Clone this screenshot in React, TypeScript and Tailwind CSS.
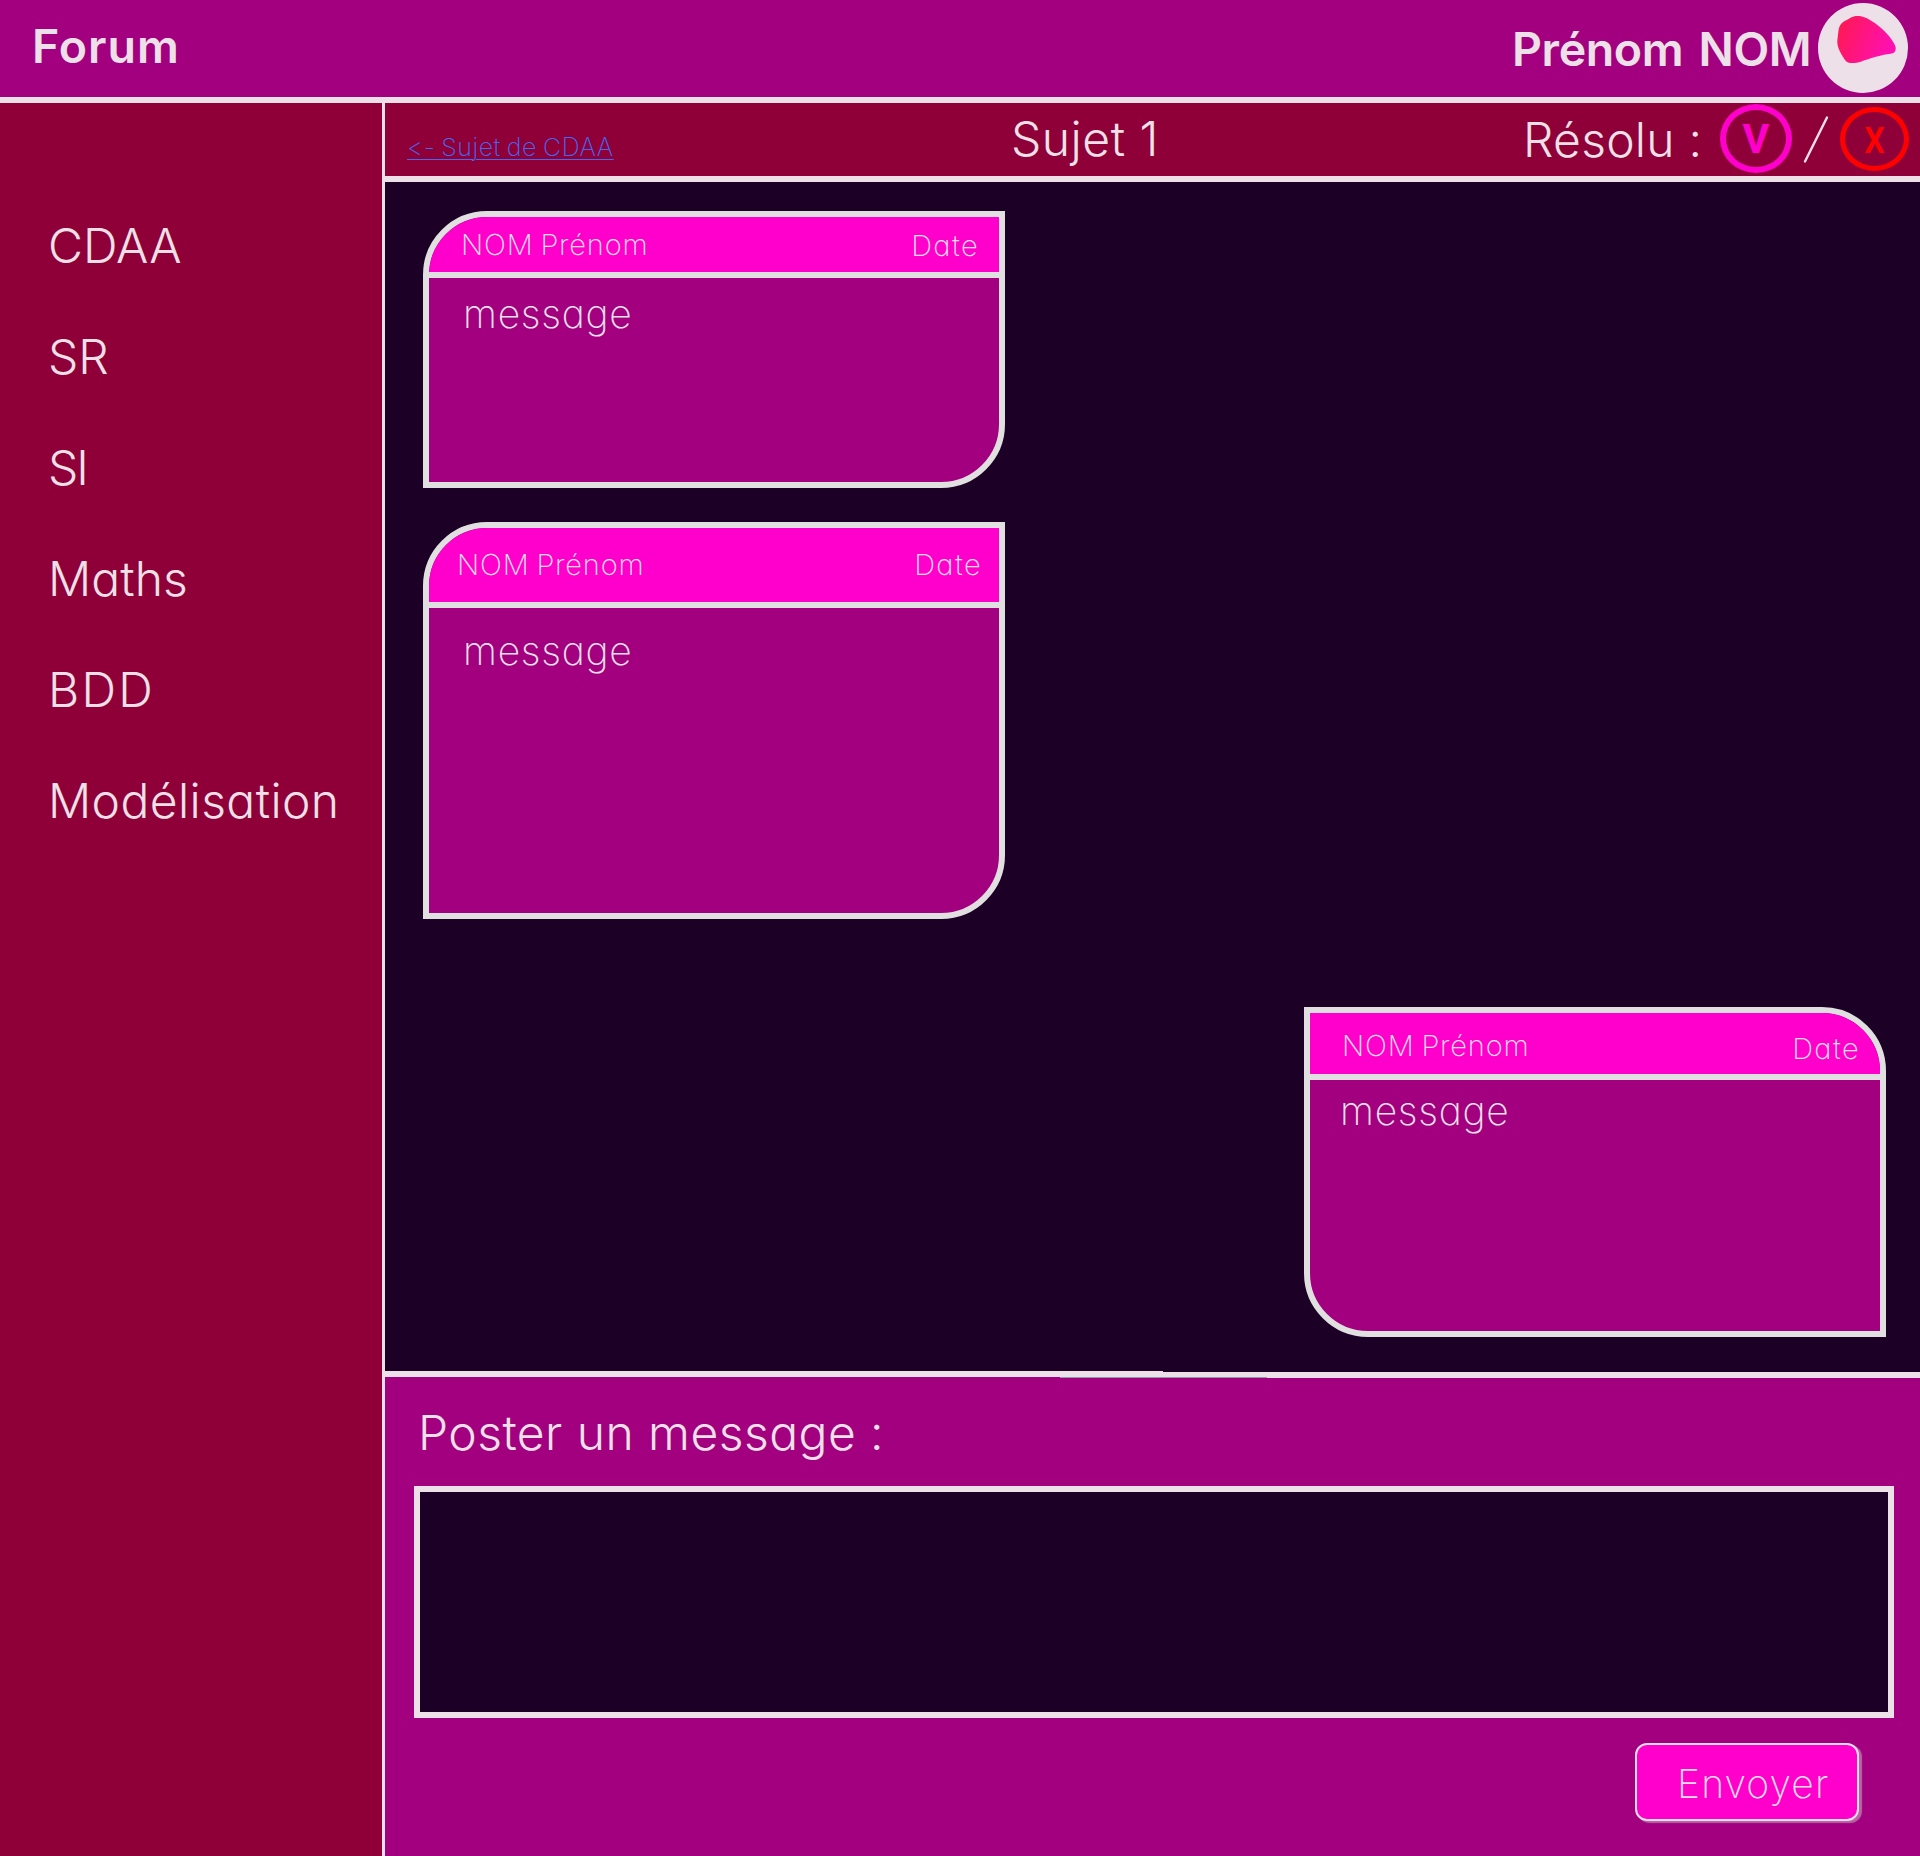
import type { ReactNode } from 'react';

const subjects = [
  { label: 'CDAA', tracking: 'tracking-[0px]' },
  { label: 'SR', tracking: 'tracking-[0px]' },
  { label: 'SI', tracking: 'tracking-[-2px]' },
  { label: 'Maths', tracking: 'tracking-[0.1px]' },
  { label: 'BDD', tracking: 'tracking-[2.3px]' },
  { label: 'Modélisation', tracking: 'tracking-[0.4px]' },
];

function Avatar() {
  return (
    <svg className="mt-[3px] size-[90px]" viewBox="0 0 90 90">
      <defs>
        <linearGradient id="blob" x1="0" y1="0" x2="1" y2="0.35">
          <stop offset="0" stopColor="#ff1a4b" />
          <stop offset="1" stopColor="#ff10b0" />
        </linearGradient>
      </defs>
      <circle cx="45" cy="45" r="45" fill="#ede0e8" />
      <path
        d="M33 14.5C36 12.5 42 12 48.5 15C60 21 70 30 75.500 39.500C77 42 77.700 43.500 77.700 45.500C77.500 50 75 50.500 71 51C57 53 47 57.500 40 59.500C34 60.500 29.500 60.500 27 57C21 48 18.500 42 19.500 36C20.500 30 20 24 23.500 20.500C26 18 29 17 33 14.500Z"
        fill="url(#blob)"
      />
    </svg>
  );
}

function Header() {
  return (
    <header className="flex h-[103px] items-start justify-between border-b-6 border-[#ede0e8] bg-[#a3007f] pl-8 text-[46.5px] leading-[56px] font-semibold">
      <h1 className="mt-[18px] tracking-[0.97px]">Forum</h1>
      <div className="flex w-[408px] justify-between pr-3">
        <span className="mt-[21px] tracking-[-0.4px] [word-spacing:4px]">Prénom NOM</span>
        <Avatar />
      </div>
    </header>
  );
}

function Sidebar() {
  return (
    <nav className="w-[385px] shrink-0 border-r-3 border-[#ede0e8] bg-[#8f0038] pt-[87px] pl-12">
      {subjects.map((s) => (
        <a key={s.label} className={`block text-[48px] leading-[111px] font-[280] ${s.tracking}`}>
          {s.label}
        </a>
      ))}
    </nav>
  );
}

function TopicBar() {
  return (
    <div className="grid h-[79px] grid-cols-[626px_512px_1fr] items-start border-b-6 border-[#ede0e8] bg-[#8f0038] text-[48px] leading-[60px] font-[270]">
      <a className="mt-7 ml-[22px] w-fit text-[25px] leading-8 font-extralight tracking-[0.5px] text-[#4468f0] underline decoration-1 underline-offset-3 [word-spacing:-1.5px]">
        {'<- Sujet de CDAA'}
      </a>
      <h2 className="mt-[6px] tracking-[0.5px]">Sujet 1</h2>
      <div className="flex items-start">
        <span className="mt-[7px] w-[197px] tracking-[0.25px]">Résolu :</span>
        <button className="mt-[1px] flex h-[69px] w-[72px] items-center justify-center rounded-[50%] border-6 border-[#ff00cc] pt-0.5 font-['Roboto'] text-[41px] leading-none font-bold text-[#ff00cc]">
          V
        </button>
        <svg className="h-[70px] w-12" viewBox="0 0 48 70" fill="none">
          <path d="M13 58.500L35 14.500" stroke="#ede0e8" strokeWidth="2.400" strokeLinecap="round" />
        </svg>
        <button className="mt-1 flex h-16 w-[69px] items-center justify-center rounded-[50%] border-5 border-[#ff0000] pt-1 font-['Roboto'] text-[36px] leading-none font-semibold text-[#ff0000]">
          <span className="scale-x-90">X</span>
        </button>
      </div>
    </div>
  );
}

type MessageProps = {
  card: string;
  header: string;
  name: string;
  date: string;
  body: string;
  children: ReactNode;
};

function Message({ card, header, name, date, body, children }: MessageProps) {
  return (
    <article className={`w-[582px] shrink-0 overflow-hidden border-6 border-[#e0e0e0] bg-[#a3007f] ${card}`}>
      <div className={`flex items-start justify-between border-b-6 border-[#e0e0e0] bg-[#ff00cc] text-[29px] leading-9 font-extralight ${header}`}>
        <span className={`tracking-[0.8px] [word-spacing:-2px] ${name}`}>NOM Prénom</span>
        <span className={`tracking-[1.4px] ${date}`}>Date</span>
      </div>
      <p className={`text-[39px] leading-12 font-[230] tracking-[0.74px] ${body}`}>{children}</p>
    </article>
  );
}

function Thread() {
  return (
    <section className="flex h-[1189px] flex-col bg-[#1d0026] pt-[29px] pr-[34px] pl-[38px]">
      <Message
        card="h-[277px] rounded-tl-[64px] rounded-br-[64px]"
        header="h-[61px] pl-8 pr-5"
        name="mt-[10px]"
        date="mt-[11px]"
        body="mt-3 ml-[34px]"
      >
        message
      </Message>
      <Message
        card="mt-[34px] h-[397px] rounded-tl-[64px] rounded-br-[64px]"
        header="h-20 pl-7 pr-[17px]"
        name="mt-[19px]"
        date="mt-[19px]"
        body="mt-[19px] ml-[34px]"
      >
        message
      </Message>
      <Message
        card="mt-[88px] h-[330px] self-end rounded-tr-[64px] rounded-bl-[64px]"
        header="h-[67px] pl-8 pr-5"
        name="mt-[15px]"
        date="mt-[18px]"
        body="mt-[7px] ml-[30px]"
      >
        message
      </Message>
    </section>
  );
}

function Divider() {
  return (
    <div className="relative flex h-[7px] bg-[#a3007f]">
      <div className="h-1.5 w-[778px] bg-[#ede0e8]" />
      <div className="flex-1 border-t border-[#1d0026] bg-[#ede0e8]" />
      <div className="absolute bottom-0 left-[675px] h-px w-[207px] bg-[#8c9da5]" />
    </div>
  );
}

function Composer() {
  return (
    <form className="flex flex-1 flex-col bg-[#a3007f] pl-[29px]">
      <label className="mt-[25px] ml-1 text-[48px] leading-[60px] font-[270] tracking-[0.45px]">
        Poster un message :
      </label>
      <textarea className="mt-[23px] h-[232px] w-[1480px] resize-none border-6 border-[#ede0e8] bg-[#1d0026]" />
      <button
        type="button"
        className="mt-[25px] ml-[1221px] flex h-[78px] w-[224px] items-start rounded-[12px] border-2 border-[#ede0e8] bg-[#ff00cc] pt-[15px] pl-10 text-[39px] leading-12 font-[250] tracking-[1.15px] shadow-[3px_2px_1px_#b965a6]"
      >
        Envoyer
      </button>
    </form>
  );
}

export default function App() {
  return (
    <div className="flex h-[1856px] w-[1920px] flex-col overflow-hidden font-['Inter',sans-serif] text-[#ede0e8] [font-feature-settings:'cv11'_1,'calt'_0]">
      <Header />
      <div className="flex flex-1">
        <Sidebar />
        <main className="flex flex-1 flex-col">
          <TopicBar />
          <Thread />
          <Divider />
          <Composer />
        </main>
      </div>
    </div>
  );
}
